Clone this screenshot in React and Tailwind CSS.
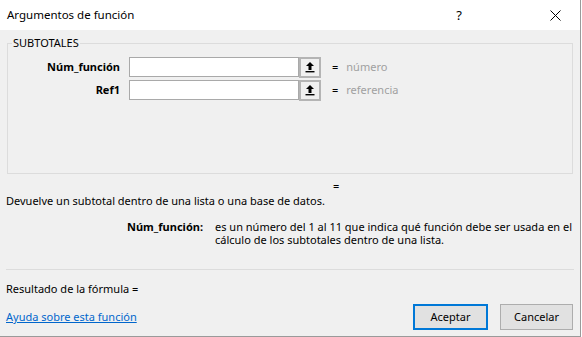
import { useState } from "react"

/*___ small arrow button next to each input ___*/
const PickButton = () => (
  <button className="flex h-[21px] w-[22px] items-center justify-center border-2 border-[#b4b4b4] bg-[#f0f0f0]">
    <svg width="10" height="12" viewBox="0 0 10 12">
      <path d="M5 1 L9 5 L6.5 5 L6.5 9 L3.5 9 L3.5 5 L1 5 Z" fill="#000" />
      <rect x="0.5" y="10" width="9" height="1.4" fill="#000" />
    </svg>
  </button>
)

const ArgRow = ({ label, hint }) => {
  const [value, setValue] = useState("")
  return (
    <div className="flex h-[20px] items-center">
      <span className="w-[113px] pr-[1px] text-right font-bold text-black">{label}</span>
      <input
        className="ml-[8px] h-[20px] w-[170px] border border-[#a9a9a9] bg-white px-1 outline-none"
        value={value}
        onChange={(e) => setValue(e.target.value)}
      />
      <PickButton />
      <span className="ml-[11px] text-black">=</span>
      <span className="ml-[8px] text-[#a0a0a0]">{hint}</span>
    </div>
  )
}

export default function App() {
  return (
    <div className="h-[337px] w-[582px] overflow-hidden bg-white text-[11px] leading-[14px] text-black [font-family:'Noto_Sans',sans-serif]">
      <div className="flex h-[337px] w-[581px] flex-col border-r border-b border-[#9a9a9a] bg-[#f0f0f0]">
        {/*____ title bar ____*/}
        <div className="flex h-[30px] shrink-0 items-center bg-white">
          <span className="ml-[7px] flex-1 text-[11.5px]">Argumentos de función</span>
          <span className="mr-[88px] text-[13px]">?</span>
          <svg className="mr-[19px]" width="11" height="11" viewBox="0 0 11 11">
            <path d="M0.5 0.5 L10.5 10.5 M10.5 0.5 L0.5 10.5" stroke="#000" strokeWidth="1" />
          </svg>
        </div>

        {/*____ group box ____*/}
        <div className="relative mx-[7px] mt-[13px] h-[131px] w-[566px] shrink-0 border border-[#dcdcdc]">
          <span className="absolute -top-[8px] left-[4px] bg-[#f0f0f0] px-[1px]">SUBTOTALES</span>
          <div className="flex flex-col gap-[3px] pt-[13px]">
            <ArgRow label="Núm_función" hint="número" />
            <ArgRow label="Ref1" hint="referencia" />
          </div>
        </div>

        <div className="ml-[333px] mt-[5px]">=</div>
        <p className="ml-[6px] mt-[1px]">Devuelve un subtotal dentro de una lista o una base de datos.</p>

        <div className="mt-[12px] flex">
          <span className="w-[203px] text-right font-bold">Núm_función:</span>
          <p className="ml-[12px] w-[360px] leading-[13px]">
            es un número del 1 al 11 que indica qué función debe ser usada en el cálculo de los subtotales dentro de una lista.
          </p>
        </div>

        <div className="mx-[6px] mt-[23px] border-t border-[#dcdcdc]" />
        <p className="ml-[6px] mt-[12px]">Resultado de la fórmula =</p>

        <div className="mt-[8px] flex items-center">
          <a href="#" className="ml-[6px] flex-1 text-[#0066cc] underline">Ayuda sobre esta función</a>
          <button className="h-[26px] w-[75px] border-2 border-[#0078d7] bg-[#e1e1e1]">Aceptar</button>
          <button className="ml-[12px] mr-[7px] h-[26px] w-[73px] border border-[#adadad] bg-[#e1e1e1]">Cancelar</button>
        </div>
      </div>
    </div>
  )
}
